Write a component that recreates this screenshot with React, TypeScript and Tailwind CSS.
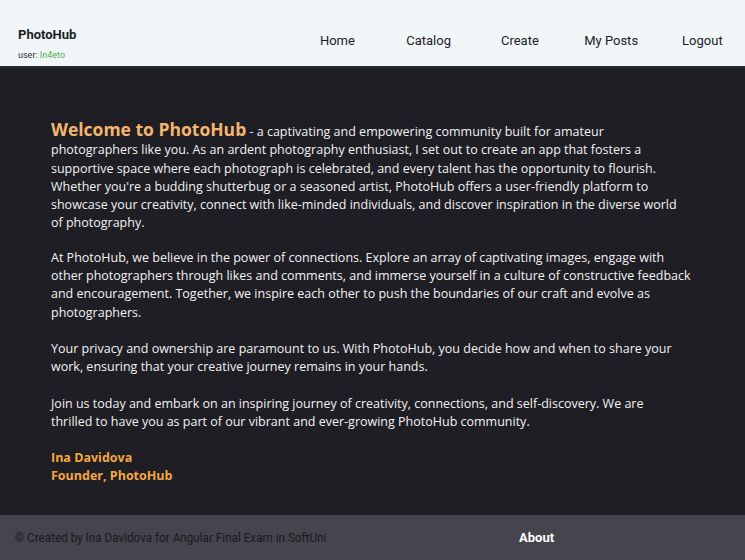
export default function App() {
  const nav = ['Home', 'Catalog', 'Create', 'My Posts', 'Logout'];
  return (
    <div className="flex h-[560px] w-[745px] flex-col bg-[#1e1e24] font-['Roboto',sans-serif]">
      {/* Header */}
      <header className="flex h-[68px] shrink-0 items-center justify-between border-b-2 border-[#2a2b30] bg-[#f1f6f9] pl-[18px]">
        <div className="pt-[21px]">
          <h1 className="text-[13px] font-bold leading-4 text-[#1b1e24]">PhotoHub</h1>
          <p className="mt-[6px] text-[9px] leading-3 text-[#333]">
            user: <span className="text-[#4caf50]">In4eto</span>
          </p>
        </div>
        <nav className="mr-[-3px] flex pt-[16px]">
          {nav.map((item) => (
            <a key={item} className="w-[91.25px] text-center text-[13px] text-[#222]">
              {item}
            </a>
          ))}
        </nav>
      </header>

      {/* Main */}
      <main className="flex-1 px-[51px] pt-[52px] font-['Open_Sans',sans-serif] text-[12.5px] leading-[18.3px] text-[#f2f2f2]">
        <p>
          <span className="inline-block text-[17.5px] font-bold leading-[19px] text-[#f5b56d]">
            Welcome to PhotoHub
          </span>{' '}
          - a captivating and empowering community built for amateur photographers like you. As an ardent photography
          enthusiast, I set out to create an app that fosters a supportive space where each photograph is celebrated,
          and every talent has the opportunity to flourish. Whether you're a budding shutterbug or a seasoned artist,
          PhotoHub offers a user-friendly platform to showcase your creativity, connect with like-minded individuals,
          and discover inspiration in the diverse world
          <br />
          of photography.
        </p>
        <p className="mt-[16px]">
          At PhotoHub, we believe in the power of connections. Explore an array of captivating images, engage with
          other photographers through likes and comments, and immerse yourself in a culture of constructive feedback
          and encouragement. Together, we inspire each other to push the boundaries of our craft and evolve as
          photographers.
        </p>
        <p className="mt-[18px]">
          Your privacy and ownership are paramount to us. With PhotoHub, you decide how and when to share your work,
          ensuring that your creative journey remains in your hands.
        </p>
        <p className="mt-[18px]">
          Join us today and embark on an inspiring journey of creativity, connections, and self-discovery. We are
          <br />
          thrilled to have you as part of our vibrant and ever-growing PhotoHub community.
        </p>
        <p className="mt-[18px] font-bold text-[#f5a742]">
          Ina Davidova
          <br />
          Founder, PhotoHub
        </p>
      </main>

      {/* Footer */}
      <footer className="flex h-[45px] shrink-0 items-center bg-[#44454d] pl-[15px]">
        <p className="w-[504px] origin-left scale-x-[0.9] whitespace-nowrap text-[13px] text-[#1a1a1a]">
          © Created by Ina Davidova for Angular Final Exam in SoftUni
        </p>
        <a className="text-[13px] font-bold text-white">About</a>
      </footer>
    </div>
  );
}
